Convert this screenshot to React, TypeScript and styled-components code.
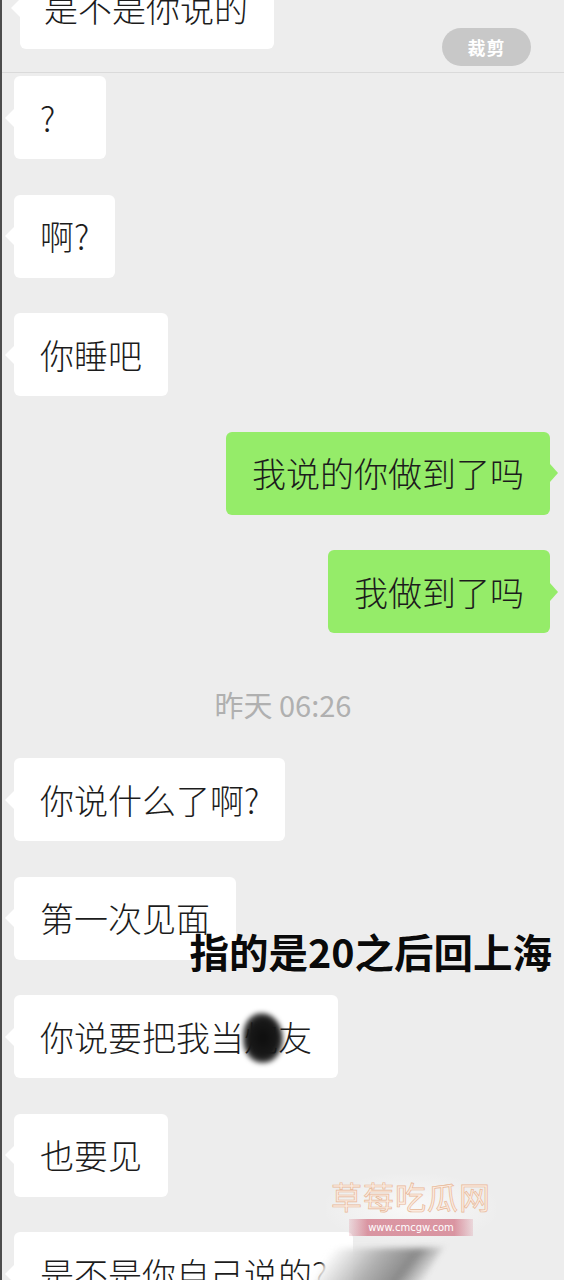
import React from "react";
import styled, { createGlobalStyle, css } from "styled-components";

type Side = "left" | "right";

type Message =
  | { kind: "bubble"; side: Side; text: React.ReactNode }
  | { kind: "time"; text: string };

const App: React.FC = () => {
  const messages: Message[] = [
    { kind: "bubble", side: "left", text: "?" },
    { kind: "bubble", side: "left", text: "啊?" },
    { kind: "bubble", side: "left", text: "你睡吧" },
    { kind: "bubble", side: "right", text: "我说的你做到了吗" },
    { kind: "bubble", side: "right", text: "我做到了吗" },
    { kind: "time", text: "昨天 06:26" },
    { kind: "bubble", side: "left", text: "你说什么了啊?" },
    { kind: "bubble", side: "left", text: "第一次见面" },
    {
      kind: "bubble",
      side: "left",
      text: (
        <>
          你说要把我当<Smudged>炮</Smudged>友
        </>
      ),
    },
    { kind: "bubble", side: "left", text: "也要见" },
    { kind: "bubble", side: "left", text: "是不是你自己说的?" },
  ];

  return (
    <React.Fragment>
      <GlobalStyle />
      <Page>
        <TopStrip>
          <TopBubble $side="left">是不是你说的</TopBubble>
          <CropPill>裁剪</CropPill>
        </TopStrip>

        <ChatList>
          {messages.map((m, i) =>
            m.kind === "time" ? (
              <Timestamp key={i}>{m.text}</Timestamp>
            ) : (
              <Row key={i} $side={m.side}>
                <Bubble $side={m.side}>{m.text}</Bubble>
              </Row>
            )
          )}
        </ChatList>

        <Caption>指的是20之后回上海</Caption>

        <Watermark>
          <WatermarkTitle>草莓吃瓜网</WatermarkTitle>
          <WatermarkUrl>www.cmcgw.com</WatermarkUrl>
        </Watermark>
        <Smear />
      </Page>
    </React.Fragment>
  );
};

const GlobalStyle = createGlobalStyle`
  html, body {
    margin: 0;
    padding: 0;
    background: #ededed;
  }
  * {
    box-sizing: border-box;
  }
`;

const Page = styled.div`
  position: relative;
  width: 564px;
  height: 1280px;
  overflow: hidden;
  background: #ededed;
  border-left: 2px solid #4d4d4d;
  font-family: "Noto Sans CJK SC", "Noto Sans", sans-serif;
  color: #1c1c1c;
`;

const TopStrip = styled.div`
  display: flex;
  justify-content: space-between;
  align-items: flex-start;
  margin-top: -34px;
  padding: 0 33px 23px 18px;
  border-bottom: 1px solid #dadada;
`;

const bubbleBase = css<{ $side: Side }>`
  position: relative;
  display: flex;
  align-items: center;
  height: 83px;
  min-width: 92px;
  padding: 0 26px;
  border-radius: 6px;
  font-size: 34px;
  font-weight: 300;
  line-height: 1;
  white-space: nowrap;
  background: ${(p) => (p.$side === "right" ? "#95ec69" : "#ffffff")};

  &::before {
    content: "";
    position: absolute;
    top: 50%;
    width: 0;
    height: 0;
    margin-top: -9px;
    border-top: 9px solid transparent;
    border-bottom: 9px solid transparent;
    ${(p) =>
      p.$side === "right"
        ? css`
            right: -8px;
            border-left: 8px solid #95ec69;
          `
        : css`
            left: -9px;
            border-right: 9px solid #ffffff;
          `}
  }
`;

const TopBubble = styled.div<{ $side: Side }>`
  ${bubbleBase}
  padding: 0 26px 0 24px;
`;

const CropPill = styled.div`
  margin-top: 62px;
  margin-bottom: -17px;
  width: 89px;
  height: 38px;
  border-radius: 19px;
  background: #c8c8c8;
  color: #ffffff;
  font-size: 18px;
  font-weight: 700;
  display: flex;
  align-items: center;
  justify-content: center;
  letter-spacing: 1px;
`;

const ChatList = styled.div`
  display: flex;
  flex-direction: column;
  gap: 35.5px;
  padding: 3px 14px 0 12px;
`;

const Row = styled.div<{ $side: Side }>`
  display: flex;
  justify-content: ${(p) => (p.$side === "right" ? "flex-end" : "flex-start")};
`;

const Bubble = styled.div<{ $side: Side }>`
  ${bubbleBase}
`;

const Timestamp = styled.div`
  height: 54px;
  line-height: 70px;
  text-align: center;
  font-size: 29px;
  color: #b0b0b0;
  padding-left: 2px;
`;

const Smudged = styled.span`
  position: relative;
  color: #222;

  &::after {
    content: "";
    position: absolute;
    left: -1px;
    top: -7px;
    width: 40px;
    height: 50px;
    border-radius: 45% 55% 50% 48%;
    background: radial-gradient(
      ellipse at center,
      #0d0d0d 0%,
      #1a1a1a 55%,
      rgba(20, 20, 20, 0.6) 78%,
      rgba(20, 20, 20, 0) 100%
    );
    filter: blur(2.5px);
  }
`;

const Caption = styled.div`
  position: absolute;
  top: 931px;
  right: 12px;
  font-size: 39.5px;
  line-height: 1;
  font-weight: 700;
  color: #0a0a0a;
  white-space: nowrap;
  text-shadow: 0 0 2px rgba(255, 255, 255, 0.6);
`;

const Watermark = styled.div`
  position: absolute;
  left: 324px;
  top: 1174px;
  width: 170px;
  display: flex;
  flex-direction: column;
  align-items: center;
  gap: 5px;
  padding: 4px 0 6px;
  background: radial-gradient(
    ellipse at center,
    rgba(250, 250, 250, 0.9) 0%,
    rgba(245, 245, 245, 0) 75%
  );
`;

const WatermarkTitle = styled.div`
  font-size: 31px;
  line-height: 36px;
  letter-spacing: 1px;
  color: #fcebe0;
  -webkit-text-stroke: 0.7px #e6b797;
  text-shadow: 0 0 1px #fff;
`;

const WatermarkUrl = styled.div`
  width: 124px;
  height: 17px;
  line-height: 17px;
  text-align: center;
  font-family: "DejaVu Sans", sans-serif;
  font-size: 10px;
  color: #ffffff;
  background: linear-gradient(
    90deg,
    rgba(214, 120, 138, 0.2) 0%,
    rgba(208, 110, 128, 0.7) 15%,
    rgba(208, 110, 128, 0.7) 85%,
    rgba(214, 120, 138, 0.2) 100%
  );
`;

const Smear = styled.div`
  position: absolute;
  left: 318px;
  top: 1248px;
  width: 110px;
  height: 44px;
  background: linear-gradient(
    100deg,
    rgba(255, 255, 255, 0.95) 0%,
    rgba(170, 170, 170, 0.9) 45%,
    rgba(120, 120, 120, 0.85) 75%,
    rgba(235, 235, 235, 0) 100%
  );
  transform: skewX(-30deg);
  filter: blur(3px);
`;

export default App;
